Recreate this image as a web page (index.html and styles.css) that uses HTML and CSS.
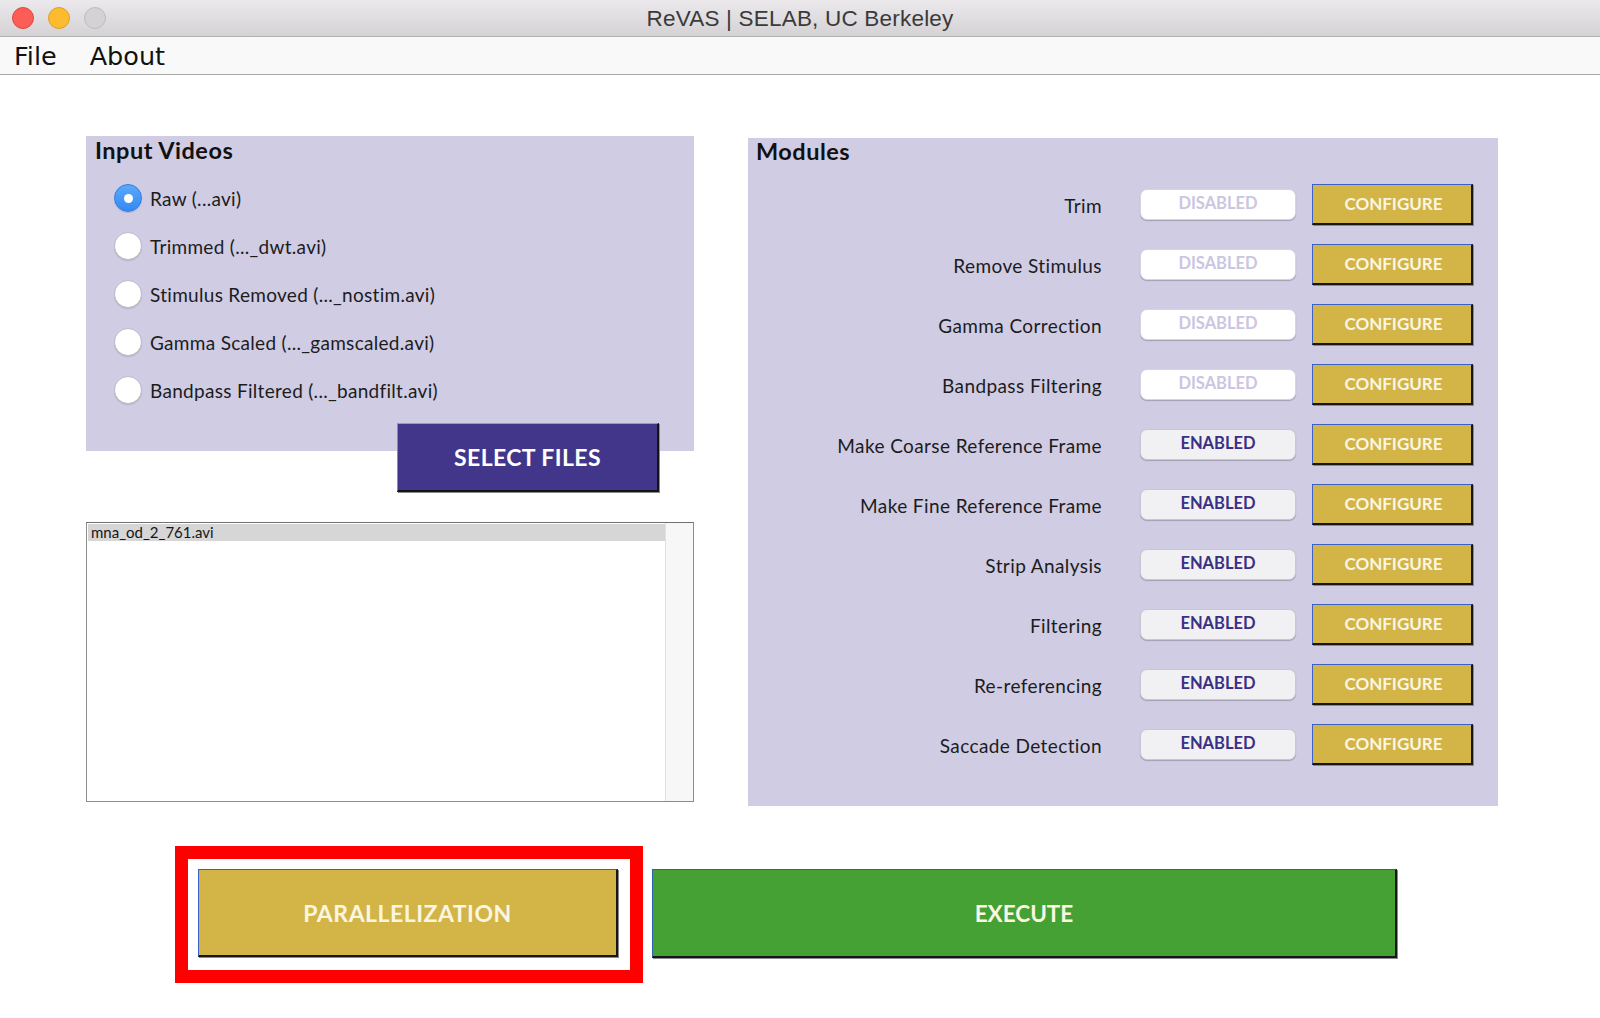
FILE: index.html
```html
<!DOCTYPE html>
<html lang="en">
<head>
<meta charset="utf-8">
<title>ReVAS | SELAB, UC Berkeley</title>
<link rel="stylesheet" href="styles.css">
</head>
<body>
<div class="window">
  <header class="titlebar">
    <div class="lights">
      <span class="light red"></span>
      <span class="light yellow"></span>
      <span class="light gray"></span>
    </div>
    <div class="title">ReVAS | SELAB, UC Berkeley</div>
    <div class="spacer"></div>
  </header>
  <nav class="menubar">
    <div class="menus"><span class="menu">File</span><span class="menu">About</span></div>
  </nav>
  <main class="content">
    <div class="columns">
      <section class="left">
        <div class="panel input-panel">
          <h2 class="panel-title">Input Videos</h2>
          <ul class="radios">
            <li class="radio-row"><span class="radio checked"></span>Raw (...avi)</li>
            <li class="radio-row"><span class="radio"></span>Trimmed (..._dwt.avi)</li>
            <li class="radio-row"><span class="radio"></span>Stimulus Removed (..._nostim.avi)</li>
            <li class="radio-row"><span class="radio"></span>Gamma Scaled (..._gamscaled.avi)</li>
            <li class="radio-row"><span class="radio"></span>Bandpass Filtered (..._bandfilt.avi)</li>
          </ul>
        </div>
        <button class="btn select">SELECT FILES</button>
        <div class="filelist">
          <div class="items"><div class="item selected">mna_od_2_761.avi</div></div>
          <div class="scroll"></div>
        </div>
      </section>
      <section class="panel modules">
        <h2 class="panel-title">Modules</h2>
        <div class="mod-row"><span class="mod-label">Trim</span><span class="toggle off">DISABLED</span><button class="btn configure">CONFIGURE</button></div>
        <div class="mod-row"><span class="mod-label">Remove Stimulus</span><span class="toggle off">DISABLED</span><button class="btn configure">CONFIGURE</button></div>
        <div class="mod-row"><span class="mod-label">Gamma Correction</span><span class="toggle off">DISABLED</span><button class="btn configure">CONFIGURE</button></div>
        <div class="mod-row"><span class="mod-label">Bandpass Filtering</span><span class="toggle off">DISABLED</span><button class="btn configure">CONFIGURE</button></div>
        <div class="mod-row"><span class="mod-label">Make Coarse Reference Frame</span><span class="toggle on">ENABLED</span><button class="btn configure">CONFIGURE</button></div>
        <div class="mod-row"><span class="mod-label">Make Fine Reference Frame</span><span class="toggle on">ENABLED</span><button class="btn configure">CONFIGURE</button></div>
        <div class="mod-row"><span class="mod-label">Strip Analysis</span><span class="toggle on">ENABLED</span><button class="btn configure">CONFIGURE</button></div>
        <div class="mod-row"><span class="mod-label">Filtering</span><span class="toggle on">ENABLED</span><button class="btn configure">CONFIGURE</button></div>
        <div class="mod-row"><span class="mod-label">Re-referencing</span><span class="toggle on">ENABLED</span><button class="btn configure">CONFIGURE</button></div>
        <div class="mod-row"><span class="mod-label">Saccade Detection</span><span class="toggle on">ENABLED</span><button class="btn configure">CONFIGURE</button></div>
      </section>
    </div>
    <div class="actions">
      <div class="highlight"><button class="btn parallel">PARALLELIZATION</button></div>
      <button class="btn execute">EXECUTE</button>
    </div>
  </main>
</div>
</body>
</html>
```

FILE: styles.css
```css
* { box-sizing: border-box; }

html, body {
  margin: 0;
  padding: 0;
  background: #ffffff;
}

body {
  font-family: "Lato", "Open Sans", sans-serif;
  color: #1b1b1b;
}

.window {
  width: 1600px;
  height: 1018px;
  display: flex;
  flex-direction: column;
  background: #ffffff;
  overflow: hidden;
}

/* ---------- title bar ---------- */
.titlebar {
  height: 37px;
  flex: none;
  display: grid;
  grid-template-columns: 1fr auto 1fr;
  align-items: center;
  background: linear-gradient(#ebe9eb, #d4d2d4);
  border-bottom: 1px solid #b4b2b4;
}

.lights {
  display: flex;
  gap: 14px;
  padding-left: 12px;
}

.light {
  width: 22px;
  height: 22px;
  border-radius: 50%;
  display: block;
}

.light.red { background: #fc5e57; border: 1px solid #e0443e; }
.light.yellow { background: #fdbb2f; border: 1px solid #dea024; }
.light.gray { background: #d3d3d3; border: 1px solid #bdbdbd; }

.title {
  font-family: "Liberation Sans", Arial, sans-serif;
  font-size: 22.5px;
  color: #3a3a3a;
  letter-spacing: 0.2px;
  padding-top: 1px;
}

/* ---------- menu bar ---------- */
.menubar {
  height: 38px;
  flex: none;
  background: #f9f9f9;
  border-bottom: 1px solid #a9a9a9;
  display: flex;
  align-items: center;
}

.menus {
  display: flex;
  gap: 33px;
  padding-left: 14px;
  font-family: "DejaVu Sans", sans-serif;
  font-size: 25.5px;
  color: #111;
}

/* ---------- content ---------- */
.content {
  flex: 1;
  display: flex;
  flex-direction: column;
}

.columns {
  display: flex;
  align-items: flex-start;
  padding-top: 61px;
  padding-left: 86px;
  gap: 54px;
}

.left {
  width: 608px;
  display: flex;
  flex-direction: column;
}

.panel {
  background: #cfcce4;
}

.panel-title {
  margin: 0;
  font-size: 23.5px;
  font-weight: 700;
  line-height: 26px;
  letter-spacing: 0.5px;
  color: #111;
}

.input-panel {
  height: 315px;
  padding: 1px 0 0 9px;
}

.radios {
  list-style: none;
  margin: 11px 0 0 19px;
  padding: 0;
}

.radio-row {
  height: 48px;
  display: flex;
  align-items: center;
  gap: 8px;
  font-size: 19px;
  letter-spacing: 0.3px;
  color: #1c1c1c;
}

.radio {
  width: 28px;
  height: 28px;
  border-radius: 50%;
  flex: none;
  background: #ffffff;
  border: 1px solid #bdbcc6;
  box-shadow: 0 1px 1px rgba(0, 0, 0, 0.12);
  display: flex;
  align-items: center;
  justify-content: center;
}

.radio.checked {
  background: linear-gradient(#5aa9fb, #3489f3);
  border-color: #2f7de2;
}

.radio.checked::after {
  content: "";
  width: 9px;
  height: 9px;
  border-radius: 50%;
  background: #ffffff;
}

/* ---------- buttons ---------- */
.btn {
  display: flex;
  align-items: center;
  justify-content: center;
  margin: 0;
  padding: 0;
  font-family: "Lato", "Open Sans", sans-serif;
  font-weight: 700;
  color: #fbf6e2;
  border-style: solid;
  border-width: 1px 2px 2px 1px;
  border-color: #3a62c6 #161616 #161616 #3a62c6;
  box-shadow: 1px 1px 0 #8a8a8a;
  cursor: pointer;
}

.select {
  width: 262px;
  height: 69px;
  margin: -28px 0 0 311px;
  background: #41368a;
  border-color: #7aa3ee #141414 #141414 #6a8fe0;
  font-size: 23px;
  color: #ffffff;
  letter-spacing: 0.4px;
}

.configure {
  width: 161px;
  height: 41px;
  background: #d3b447;
  font-size: 17px;
  flex: none;
  margin-left: 16px;
  padding-left: 3px;
}

.parallel {
  width: 420px;
  height: 88px;
  background: #d3b447;
  font-size: 23px;
  letter-spacing: 0.5px;
}

.execute {
  width: 745px;
  height: 89px;
  margin: 23px 0 0 9px;
  background: #45a133;
  border-color: #2c5fae #161616 #161616 #2c5fae;
  font-size: 22.5px;
}

/* ---------- file list ---------- */
.filelist {
  margin-top: 30px;
  height: 280px;
  border: 1px solid #8c8c8c;
  border-top-color: #707070;
  background: #ffffff;
  display: flex;
}

.items {
  flex: 1;
  padding: 1px 0 0 1px;
}

.item {
  height: 17px;
  line-height: 17px;
  font-size: 15px;
  padding-left: 3px;
  color: #151515;
}

.item.selected {
  background: #d6d6d6;
}

.scroll {
  width: 28px;
  background: #f7f7f7;
  border-left: 1px solid #e1e1e1;
}

/* ---------- modules ---------- */
.modules {
  width: 750px;
  height: 668px;
  margin-top: 2px;
  padding: 0 25px 0 8px;
}

.modules .panel-title {
  margin-bottom: 10px;
}

.mod-row {
  height: 60px;
  display: flex;
  align-items: center;
}

.mod-label {
  width: 346px;
  margin-right: 38px;
  text-align: right;
  font-size: 19px;
  letter-spacing: 0.4px;
  color: #1c1c1c;
  padding-top: 2px;
}

.toggle {
  width: 156px;
  height: 31px;
  flex: none;
  display: flex;
  align-items: center;
  justify-content: center;
  border-radius: 7px;
  font-weight: 700;
  font-size: 16.5px;
  padding-bottom: 3px;
  box-shadow: 0 1px 1px rgba(0, 0, 0, 0.22);
}

.toggle.on {
  background: #f1f1f4;
  border: 1px solid #c8c7d3;
  color: #3b2f85;
}

.toggle.off {
  background: #ffffff;
  border: 1px solid #d6d4e4;
  color: #cac6e1;
}

/* ---------- actions ---------- */
.actions {
  display: flex;
  align-items: flex-start;
  margin-top: 40px;
  padding-left: 175px;
}

.highlight {
  border: 13px solid #ff0000;
  padding: 10px 12px 13px 10px;
  background: #ffffff;
}
```
